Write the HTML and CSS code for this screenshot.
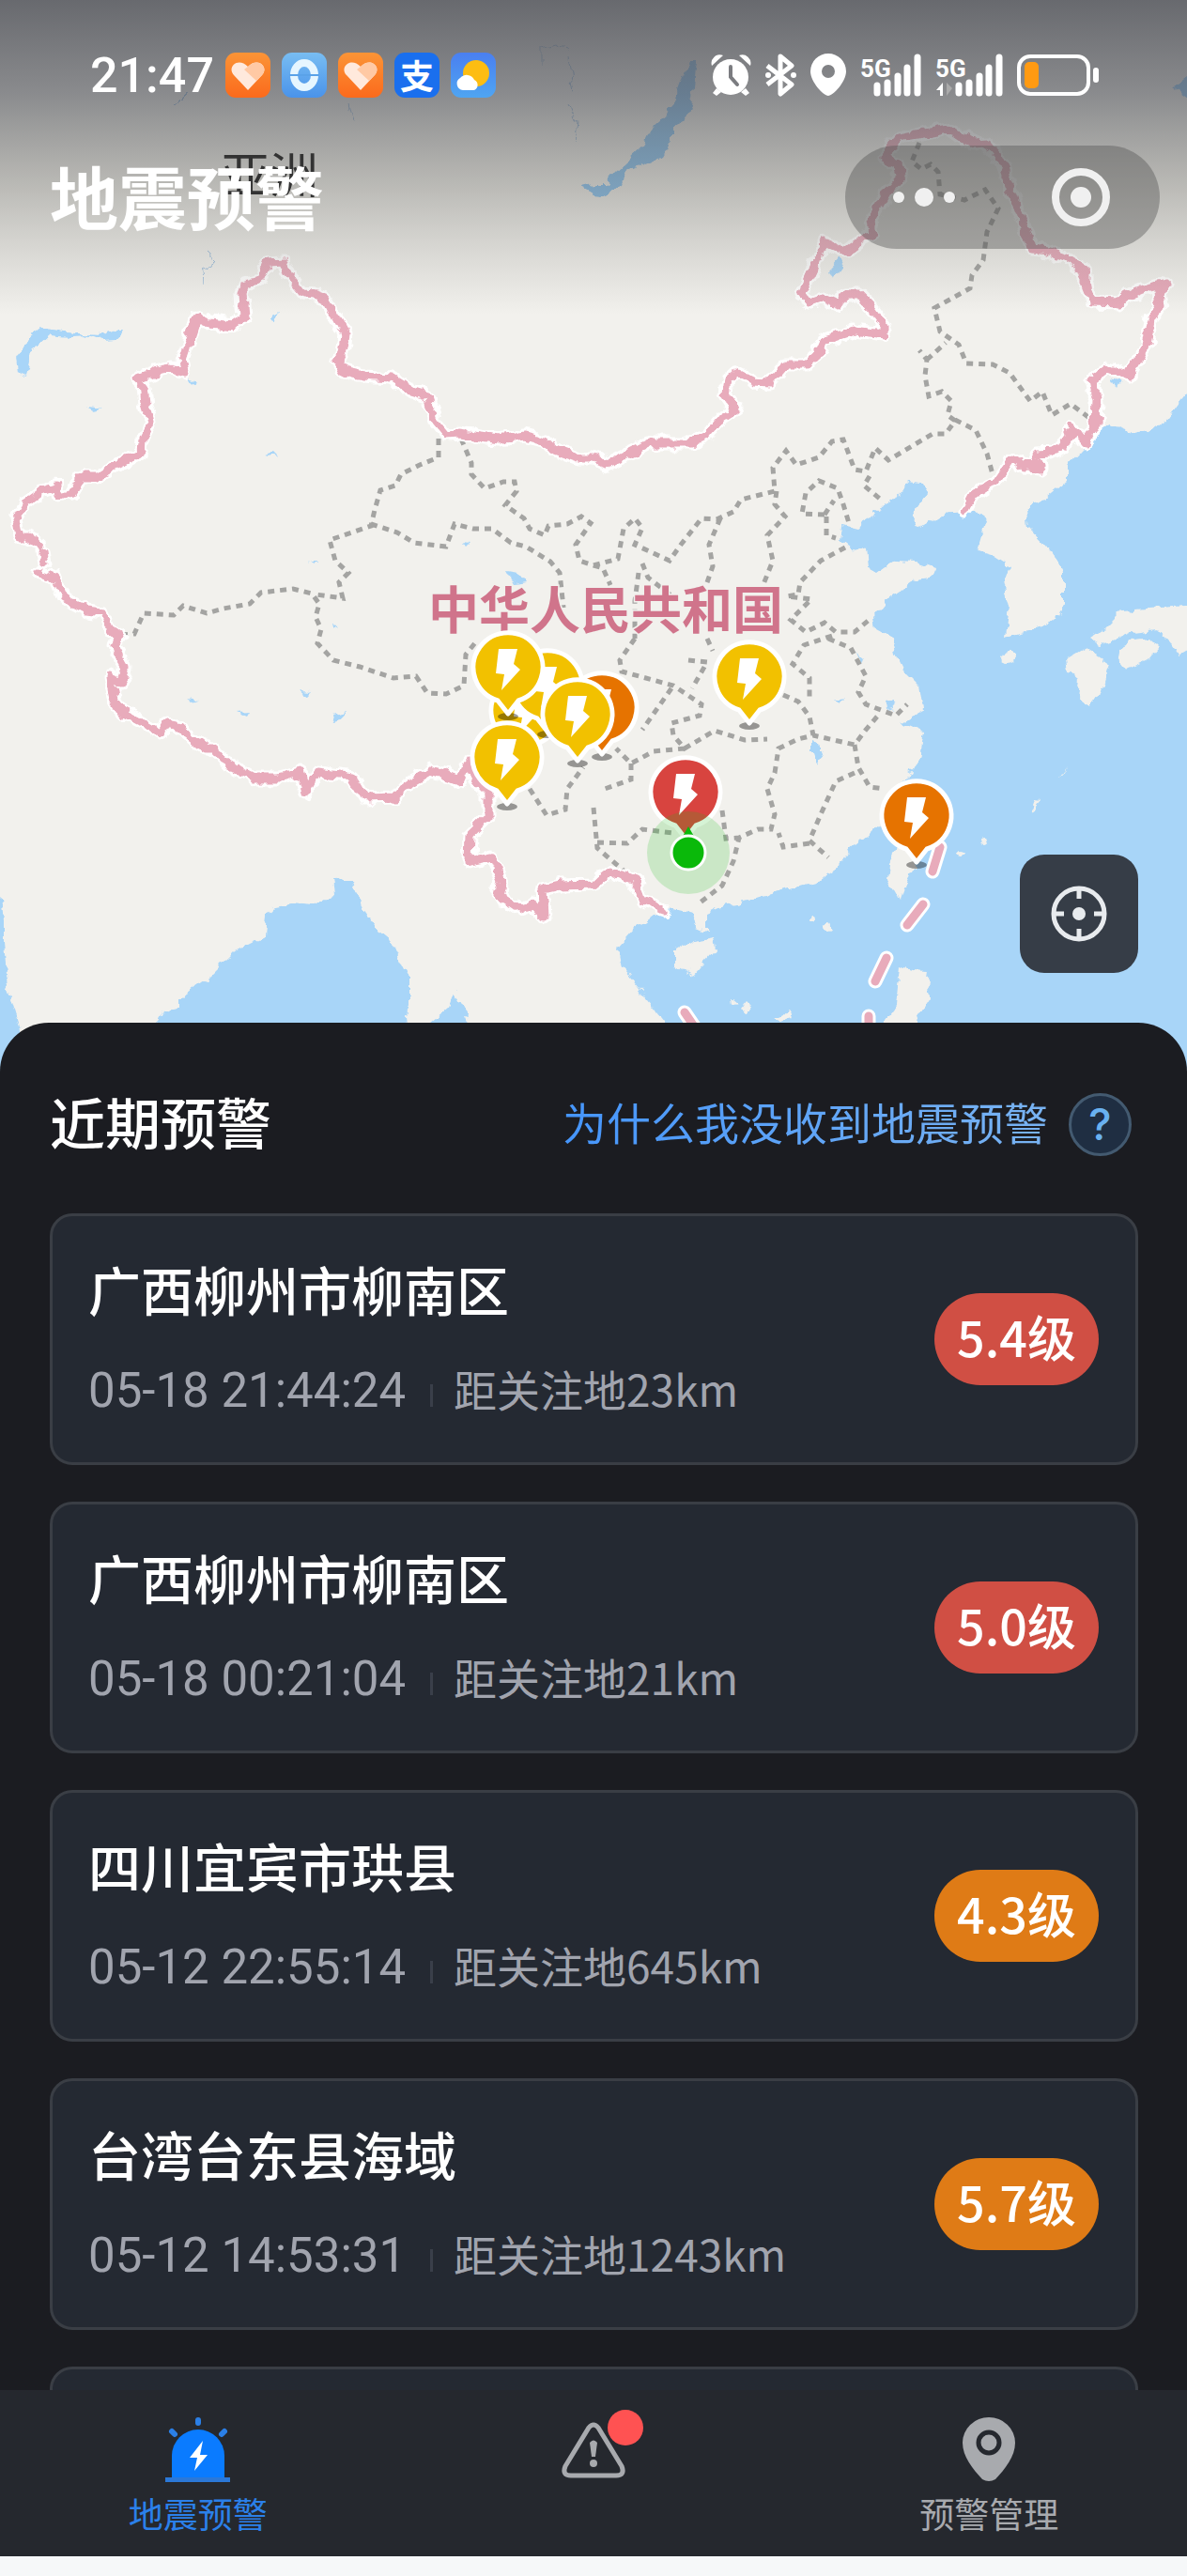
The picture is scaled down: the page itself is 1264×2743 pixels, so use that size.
FILE: index.html
```html
<!DOCTYPE html>
<html lang="zh-CN">
<head>
    <meta charset="UTF-8">
    <meta name="viewport" content="width=device-width, initial-scale=1.0">
    <title>地震预警</title>
    <link rel="stylesheet" href="styles.css">
</head>
<body>
    <div class="app">
        <section class="map">
            <svg class="map-canvas" viewBox="0 0 1264 1145" role="img" aria-label="地图">
                <defs>
                    <linearGradient id="top-shade" x1="0" y1="0" x2="0" y2="1">
                        <stop offset="0" stop-color="#55575d" stop-opacity="0.88"/>
                        <stop offset="0.3" stop-color="#55575d" stop-opacity="0.66"/>
                        <stop offset="0.6" stop-color="#63635f" stop-opacity="0.38"/>
                        <stop offset="0.82" stop-color="#6f6f6a" stop-opacity="0.17"/>
                        <stop offset="1" stop-color="#6f6f6a" stop-opacity="0"/>
                    </linearGradient>
                    <!-- breaks up straight segments of coasts and borders -->
                    <filter id="rough" filterUnits="userSpaceOnUse" x="-20" y="-20" width="1304" height="1185">
                        <feTurbulence type="fractalNoise" baseFrequency="0.07" numOctaves="3" seed="4" result="noise"/>
                        <feDisplacementMap in="SourceGraphic" in2="noise" scale="12" xChannelSelector="R" yChannelSelector="G"/>
                    </filter>
                    <g id="pin">
                        <ellipse cx="0" cy="52" rx="11" ry="4" fill="#000" fill-opacity="0.38"/>
                        <path class="pin-body" d="M0 49 L-11 35 A37 37 0 1 1 11 35 Z"/>
                        <path fill="#fff" d="M-10 -20 H10 L6 -4 L13 2 L-7 24 L-4 7 L-13 6 Z"/>
                    </g>
                    <path id="border" d="M22 572 L18 552 28 535 44 523 60 518 62 528 77 525 87 508 103 508 125 495 151 482 152 467 161 450 155 430 153 412 145 404 165 396 183 392 197 396 194 383 209 337 224 344 247 347 260 338 258 312 262 302 278 297 285 280 301 279 308 293 324 313 336 314 347 318 357 337 368 357 365 375 359 385 365 395 387 400 415 402 439 417 455 422 463 447 476 463 490 462 532 468 558 464 580 470 588 478 617 488 632 488 646 495 692 472 733 472 753 462 765 448 784 436 773 420 775 405 784 397 803 407 819 408 837 388 858 388 870 377 876 363 910 352 942 356 942 347 928 327 914 313 900 313 892 325 876 318 862 323 854 312 868 282 878 258 900 268 918 255 930 248 928 235 946 203 959 188 954 173 942 168 948 158 958 147 987 142 1011 137 1035 153 1051 152 1065 170 1071 188 1087 230 1095 250 1099 265 1116 267 1132 273 1156 288 1156 302 1164 322 1192 323 1200 315 1222 306 1244 302 1234 310 1236 325 1226 340 1220 370 1202 400 1180 392 1163 405 1168 427 1167 453 1155 472 1143 457 1132 475 1120 482 1103 483 1109 498 1089 497 1078 488 1063 510 1035 528 1027 543
                        M30 572 L42 580 M45 588 L47 600
                        M40 610 L60 618 68 637 93 650 109 652 115 667 129 677 121 687 122 693 133 712 128 727 117 720 121 743 129 757 150 768 171 780 177 770 187 772 220 797 228 797 238 810 255 820 270 828 298 828 320 823 326 843 338 822 375 827 389 850 421 849 431 837 459 820 490 832 498 813 508 830 520 843 520 870 500 890 499 917 523 912 534 937 530 953 552 968 568 963 580 975 578 947 596 943 632 942 650 927 676 938 684 960 707 968"/>
                    <path id="sea-border" d="M1001 902 L993 928 M983 963 L966 985 M944 1020 L932 1045 M925 1082 V1100 M729 1078 L744 1100"/>
                </defs>

                <rect width="1264" height="1145" fill="#f2f1ed"/>

                <!-- seas -->
                <g fill="#a8d5f8" filter="url(#rough)">
                    <path d="M1290 400 L1264 417 1253 430 1241 447 1225 458 1208 462 1182 452 1168 458 1152 480 1136 497 1136 513 1115 530 1093 543 1095 560 1114 580 1125 595 1132 610 1132 643 1126 660 1100 670 1071 677 1075 647 1069 620 1075 603 1058 592 1041 587 1051 553 1042 546 1027 545 1003 547 979 562 971 550 987 527 981 515 966 513 954 532 932 543 928 553 914 562 898 558 896 575 906 583 922 585 924 603 936 610 954 597 975 598 995 605 991 615 975 617 946 638 930 658 932 670 950 680 954 697 962 713 979 730 983 757 960 770 983 780 979 807 970 825 958 837 946 858 934 880 906 903 892 925 874 937 834 948 801 958 769 965 753 972 753 992 741 987 738 973 713 967 695 976 676 990 658 1010 662 1030 684 1057 709 1089 V1160 H1290 Z"/>
                    <path d="M160 1160 L167 1089 173 1078 193 1073 193 1062 218 1045 233 1030 250 1013 282 997 284 973 290 966 306 963 335 965 357 953 355 933 363 940 377 940 387 970 400 988 415 1000 427 1027 435 1043 435 1067 431 1080 436 1160 Z"/>
                    <path d="M455 1160 L459 1089 478 1073 484 1057 492 1070 500 1089 505 1160 Z"/>
                    <path d="M-20 940 L0 953 4 980 4 1003 8 1050 20 1089 40 1160 H-20 Z"/>
                </g>

                <!-- islands -->
                <g fill="#f2f1ed" filter="url(#rough)">
                    <path d="M761 998 L763 1010 739 1038 719 1027 719 1013 737 1002 Z"/>
                    <path d="M974 903 L972 927 962 946 958 958 946 937 948 917 955 905 Z"/>
                    <path d="M958 1030 L972 1034 989 1035 987 1050 991 1063 974 1090 V1160 H940 L942 1086 954 1070 Z"/>
                    <path d="M1290 645 L1264 645 1196 650 1178 668 1160 680 1172 688 1208 673 1232 670 1244 683 1255 698 1264 693 1290 690 Z"/>
                    <path d="M1192 690 L1208 682 1224 680 1234 690 1224 702 1200 713 1190 700 Z"/>
                    <path d="M1136 702 L1156 690 1182 707 1176 727 1160 753 1148 743 1150 723 1138 713 Z"/>
                    <ellipse cx="1073" cy="701" rx="8" ry="4"/>
                    <ellipse cx="1023" cy="907" rx="6" ry="3"/>
                    <ellipse cx="1049" cy="898" rx="4" ry="3"/>
                    <ellipse cx="864" cy="979" rx="2" ry="3"/>
                    <ellipse cx="881" cy="986" rx="3" ry="3"/>
                    <path d="M1127 828 L1134 817 1130 826 Z M1097 868 L1103 853 1109 854 Z M780 1063 L786 1068 781 1070 Z M788 1076 L796 1066 800 1070 792 1080 Z M822 1086 L838 1078 842 1084 832 1088 Z"/>
                </g>

                <!-- lakes -->
                <g fill="#a8d5f8" filter="url(#rough)">
                    <path fill="#8cc6f4" d="M733 65 H742 L738 100 731 127 715 137 715 150 705 167 680 177 668 182 662 198 640 208 632 207 619 200 632 197 644 197 656 183 668 172 686 155 696 135 711 122 721 97 Z"/>
                    <path fill="#8cc6f4" d="M1264 82 L1249 93 1264 104 Z"/>
                    <path d="M133 350 L127 362 111 363 97 358 75 359 52 357 42 366 34 373 30 393 28 400 20 393 18 380 26 365 44 350 64 352 91 356 107 357 125 350 Z"/>
                    <path d="M896 275 L899 282 888 297 884 288 Z"/>
                    <path d="M1184 404 L1194 407 1190 415 Z"/>
                    <path d="M540 608 L552 610 559 620 548 622 Z"/>
                    <path d="M297 331 L289 334 288 339 293 340 Z M201 402 L209 405 208 408 203 406 Z M281 484 L290 482 295 487 Z M89 432 L110 434 98 437 Z"/>
                    <path d="M352 762 L366 758 362 766 354 768 Z M317 736 L333 737 327 743 Z M252 758 L264 757 261 762 Z M201 743 L213 745 207 747 Z M328 599 L338 599 332 601 Z M494 579 L500 580 497 583 Z M352 665 L360 666 356 669 Z"/>
                    <path d="M943 747 L951 745 952 755 944 757 Z M866 790 L872 793 875 806 870 815 866 803 Z M889 742 L896 744 900 743 895 748 Z M912 695 L920 702 918 708 Z"/>
                    <path class="river" d="M218 266 L231 278 217 286 218 303 M578 68 V50 L592 46 605 52 M604 60 L610 100 M606 112 L614 130 612 150 M200 98 L186 112 M371 112 L376 128"/>
                </g>

                <!-- provinces -->
                <path class="province" d="M129 676 L143 675 153 653 185 655 195 645 220 653 238 648 266 643 278 631 312 627 332 632 340 643 336 657 342 670 338 685 355 703 383 710 419 722 443 720 455 738 475 739 494 730 496 697 508 682
                    M467 467 L467 487 447 495 427 505 421 517 405 522 399 543 395 560 351 575 357 597 371 610 361 620 365 637 336 633
                    M395 558 L423 567 441 578 475 582 484 558 504 563 524 563 544 578 560 582 586 598 596 610 600 647
                    M491 467 L502 493 502 505 516 520 536 513 548 513 550 523 538 538 558 552 564 563 580 570 584 560 604 558 619 550 629 557 613 580 617 597 632 602 642 605 650 623
                    M632 602 L658 595 664 563 676 552 684 562 676 580 713 597 725 580 747 552 763 553 781 545 789 532 825 523 823 498 837 480 848 495 872 487 886 470 898 468 910 500 922 502 932 477 946 490 993 462 1007 462 1017 448 1009 442 1013 427 1003 417 989 422 985 400 987 383 979 373 M987 383 L1007 365
                    M979 152 L971 172 981 180 991 175 999 183 1001 207 1027 213 1049 202 1063 222 1051 247 1047 277 1035 293 1033 307 995 328 1001 353 1021 367 1029 387 1057 388 1075 397 1097 427 1110 417 1120 442 1140 430 1160 445
                    M1017 447 L1039 458 1051 483 1057 505 M926 507 L920 517 938 532
                    M878 548 L854 547 858 525 872 512 892 520 898 537 904 557 M878 548 L888 533 M880 550 V570 L890 573
                    M827 523 L825 537 836 550 817 570 823 597 813 622
                    M767 552 L755 580 759 603 752 623 M753 680 L759 693
                    M684 600 L690 615 716 635 M680 610 L676 640 676 680
                    M900 583 L874 597 852 620 850 633 838 635 864 638 842 660 858 673 878 663 890 673 910 673 928 658
                    M886 677 L856 687 844 707 862 722 862 743 M834 740 L850 747 862 763 866 783 850 787 829 797 825 823 817 840 825 867 821 883 807 883 787 892 781 917 769 943 743 963
                    M882 680 L906 690 922 720 914 737 922 750 954 762 966 750 M934 763 L922 777 910 793 866 783 M910 793 L914 817 926 838 942 840 M910 823 L890 832 874 867 862 895 882 913 M862 898 L834 902 829 887
                    M676 680 L660 703 662 715 717 730 747 750 745 762 715 770 717 783 729 797 761 778 793 788 817 787
                    M733 703 L753 705 737 733 M715 733 L684 777 M729 797 L696 800 672 813 656 797 M672 813 L672 830 644 840 M632 860 L636 903 664 927 M636 897 L668 898 684 883 717 887 M769 863 L773 893 787 892
                    M564 840 L582 868 602 862 604 840 621 817"/>

                <!-- national border -->
                <g filter="url(#rough)">
                    <use class="border-halo" href="#border"/>
                    <use class="border-line" href="#border"/>
                </g>
                <use class="border-halo" href="#sea-border"/>
                <use class="border-line" href="#sea-border"/>

                <rect width="1264" height="335" fill="url(#top-shade)"/>

                <text class="continent" x="235" y="206">亚洲</text>
                <text class="country" x="456" y="670">中华人民共和国</text>

                <!-- epicentres -->
                <use class="orange" href="#pin" x="641" y="754"/>
                <use class="yellow" href="#pin" x="560" y="757"/>
                <use class="yellow" href="#pin" x="583" y="730"/>
                <use class="yellow" href="#pin" x="615" y="761"/>
                <use class="yellow" href="#pin" x="541" y="711"/>
                <use class="yellow" href="#pin" x="540" y="807"/>
                <use class="yellow" href="#pin" x="798" y="721"/>
                <use class="red" href="#pin" x="730" y="844"/>
                <use class="orange" href="#pin" x="976" y="869"/>

                <!-- followed place -->
                <circle cx="733" cy="908" r="44" fill="#14be14" fill-opacity="0.18"/>
                <path d="M733 880 L741 894 H725 Z" fill="#0ab90a"/>
                <circle cx="733" cy="908" r="18" fill="#0ab90a" stroke="#fff" stroke-width="3"/>
            </svg>

            <header class="overlay">
                <div class="status-bar">
                    <span class="clock">21:47</span>
                    <div class="status-apps">
                        <svg class="app-icon heart" viewBox="0 0 48 48"><path fill="#ffe9dc" d="M24 40 L9 24 C1 15 14 4 24 15 C34 4 47 15 39 24 Z"/><path fill="#ffc9a4" d="M24 15 C34 4 47 15 39 24 L33 30 L20 18 Z"/></svg>
                        <svg class="app-icon ring" viewBox="0 0 48 48"><ellipse cx="24" cy="24" rx="11" ry="13" fill="none" stroke="#e6f6ff" stroke-width="8"/><path d="M8 24 H40" stroke="#5aa2e8" stroke-width="2"/></svg>
                        <svg class="app-icon heart" viewBox="0 0 48 48"><path fill="#ffe9dc" d="M24 40 L9 24 C1 15 14 4 24 15 C34 4 47 15 39 24 Z"/><path fill="#ffc9a4" d="M24 15 C34 4 47 15 39 24 L33 30 L20 18 Z"/></svg>
                        <span class="app-icon pay">支</span>
                        <svg class="app-icon weather" viewBox="0 0 48 48"><circle cx="27" cy="22" r="14" fill="#fdbd12"/><path fill="#fff" d="M13 40 A7 7 0 0 1 10 27 A9 9 0 0 1 25 29 A6 6 0 0 1 25 40 Z"/></svg>
                    </div>
                    <div class="status-system">
                        <svg width="43" height="46" viewBox="0 0 43 46"><g fill="#fff"><circle cx="21" cy="25" r="19"/><path d="M1 13 A9 9 0 0 1 13 2 Z M42 13 A9 9 0 0 0 30 2 Z M6 37 L11 41 L6 45 L2 42 Z M37 37 L32 41 L37 45 L41 42 Z"/></g><path d="M21 14 V25 L28 33" fill="none" stroke="#7b7c80" stroke-width="4" stroke-linecap="round"/></svg>
                        <svg width="33" height="46" viewBox="0 0 33 46"><path d="M2 13 L28 33 L16 43 V3 L28 13 L2 33" fill="none" stroke="#fff" stroke-width="5" stroke-linejoin="round"/><circle cx="30" cy="23" r="3" fill="#fff"/><circle cx="3" cy="23" r="3" fill="#fff"/></svg>
                        <svg width="38" height="46" viewBox="0 0 38 46"><path fill="#fff" fill-rule="evenodd" d="M19 45 C14 45 0 30 0 19 A19 19 0 0 1 38 19 C38 30 24 45 19 45 Z M19 12 A7 7 0 1 0 19 26 A7 7 0 1 0 19 12 Z"/></svg>
                        <svg width="65" height="46" viewBox="0 0 65 46"><text class="net" x="0" y="25">5G</text><path d="M18 34 V42 M29 31 V42 M40 24 V42 M50 15 V42 M61 4 V42" stroke="#fff" stroke-width="7" stroke-linecap="round"/></svg>
                        <svg width="72" height="46" viewBox="0 0 72 46"><text class="net" x="0" y="25">5G</text><path d="M25 34 V42 M36 31 V42 M47 24 V42 M57 15 V42 M68 4 V42" stroke="#fff" stroke-width="7" stroke-linecap="round"/><path d="M1 39 L8 31 V45 H5 V39 Z" fill="#fff"/><path d="M12 31 V45 L18 37 Z" fill="#aaa"/></svg>
                        <svg width="88" height="46" viewBox="0 0 88 46"><rect x="2" y="3" width="74" height="40" rx="12" fill="none" stroke="#fff" stroke-width="4"/><rect x="8" y="9" width="15" height="28" rx="5" fill="#ff9a12"/><rect x="81" y="15" width="6" height="16" rx="3" fill="#fff"/></svg>
                    </div>
                </div>
                <div class="title-bar">
                    <h1>地震预警</h1>
                    <div class="capsule">
                        <button type="button" aria-label="更多">
                            <svg width="66" height="22" viewBox="0 0 66 22" fill="#f0f0f0"><circle cx="6" cy="11" r="6"/><circle cx="33" cy="11" r="10"/><circle cx="60" cy="11" r="6"/></svg>
                        </button>
                        <button type="button" aria-label="关闭">
                            <svg width="62" height="62" viewBox="0 0 62 62"><circle cx="31" cy="31" r="27" fill="none" stroke="#f0f0f0" stroke-width="8"/><circle cx="31" cy="31" r="11" fill="#f0f0f0"/></svg>
                        </button>
                    </div>
                </div>
            </header>

            <button class="locate" type="button" aria-label="定位">
                <svg width="60" height="60" viewBox="0 0 60 60" stroke="#e8ebee" stroke-width="5" fill="none"><circle cx="30" cy="30" r="27"/><path d="M30 3 V14 M30 46 V57 M3 30 H14 M46 30 H57"/><circle cx="30" cy="30" r="7" fill="#e8ebee" stroke="none"/></svg>
            </button>
        </section>

        <main class="sheet">
            <div class="sheet-header">
                <h2>近期预警</h2>
                <a class="help" href="#">
                    <span class="help-text">为什么我没收到地震预警</span>
                    <span class="help-mark">?</span>
                </a>
            </div>
            <ul class="quakes">
                <li class="quake">
                    <div class="quake-info">
                        <h3>广西柳州市柳南区</h3>
                        <p><time>05-18 21:44:24</time><span>距关注地23km</span></p>
                    </div>
                    <strong class="level high">5.4级</strong>
                </li>
                <li class="quake">
                    <div class="quake-info">
                        <h3>广西柳州市柳南区</h3>
                        <p><time>05-18 00:21:04</time><span>距关注地21km</span></p>
                    </div>
                    <strong class="level high">5.0级</strong>
                </li>
                <li class="quake">
                    <div class="quake-info">
                        <h3>四川宜宾市珙县</h3>
                        <p><time>05-12 22:55:14</time><span>距关注地645km</span></p>
                    </div>
                    <strong class="level">4.3级</strong>
                </li>
                <li class="quake">
                    <div class="quake-info">
                        <h3>台湾台东县海域</h3>
                        <p><time>05-12 14:53:31</time><span>距关注地1243km</span></p>
                    </div>
                    <strong class="level">5.7级</strong>
                </li>
                <li class="quake"></li>
            </ul>
        </main>

        <nav class="tabs">
            <a class="tab active" href="#">
                <svg width="70" height="70" viewBox="0 0 70 70"><path fill="#0a7bff" d="M7 66 V42 A28 28 0 0 1 63 42 V66 Z"/><path fill="#2b78d8" d="M0 65 H69 V70 H0 Z"/><path d="M35 4 V7 M7 16 L10 19 M63 16 L60 19" stroke="#2b7fe6" stroke-width="6" stroke-linecap="round"/><path fill="#fff" d="M40 26 L26 44 H34 L31 58 L45 41 H37 Z"/></svg>
                <span>地震预警</span>
            </a>
            <a class="tab" href="#" aria-label="预警">
                <span class="tab-icon">
                    <svg width="70" height="70" viewBox="0 0 70 70"><path d="M30 12 Q35 6 40 12 L65 53 Q69 63 59 63 H11 Q1 63 5 53 Z" fill="none" stroke="#a8aaae" stroke-width="5"/><path d="M31 28 Q35 23 39 28 L37 43 H33 Z" fill="#a8aaae"/><circle cx="35" cy="50" r="4" fill="#a8aaae"/></svg>
                    <i class="dot"></i>
                </span>
            </a>
            <a class="tab" href="#">
                <svg width="70" height="70" viewBox="0 0 70 70"><path fill="#a8aaae" d="M28 67 C18 56 7 43 7 28 A28 27 0 0 1 63 28 C63 43 52 56 42 67 Q35 71 28 67 Z"/><circle cx="35" cy="28" r="11" fill="#a8aaae" stroke="#25282e" stroke-width="5"/></svg>
                <span>预警管理</span>
            </a>
        </nav>
    </div>
</body>
</html>
```
FILE: styles.css
```css
:root {
    --page-bg: #f6f8f9;
    --sheet-bg: #1b1c21;
    --card-bg: #242932;
    --card-border: #3a3e45;
    --bar-bg: #25282e;
    --muted: #a1a4ae;
    --red: #d04f44;
    --orange: #df7b16;
    --cjk: "Noto Sans CJK SC", sans-serif;
}

* {
    box-sizing: border-box;
}

body {
    margin: 0;
    background: var(--page-bg);
    font-family: var(--cjk);
    color: #fff;
}

h1, h2, h3, p, ul {
    margin: 0;
    padding: 0;
}

a {
    color: inherit;
    text-decoration: none;
}

button {
    padding: 0;
    border: none;
    background: none;
    cursor: pointer;
}

svg {
    display: block;
    flex: none;
}

.app {
    height: 100vh;
    padding-bottom: 21px;
    display: flex;
    flex-direction: column;
}

/* Map */
.map {
    position: relative;
    flex: none;
}

.map-canvas {
    width: 100%;
    height: auto;
}

.province {
    fill: none;
    stroke: #a4a4a2;
    stroke-width: 5;
    stroke-dasharray: 7 6;
}

.river {
    fill: none;
    stroke: #9fbfdd;
    stroke-width: 1;
}

.border-halo,
.border-line {
    fill: none;
    stroke-linejoin: round;
    stroke-linecap: round;
}

.border-halo {
    stroke: #fff;
    stroke-width: 15;
}

.border-line {
    stroke: #e8abbb;
    stroke-width: 9;
}

.continent {
    font-size: 52px;
    fill: #333;
}

.country {
    font-size: 54px;
    font-weight: 700;
    fill: #d0748b;
    stroke: #f2f1ed;
    stroke-width: 3;
    paint-order: stroke;
}

.pin-body {
    stroke: #fff;
    stroke-width: 5;
    stroke-linejoin: round;
}

.yellow {
    fill: #f2c100;
}

.orange {
    fill: #e67300;
}

.red {
    fill: #d8443f;
}

.overlay {
    position: absolute;
    top: 0;
    left: 0;
    right: 0;
    padding-top: 56px;
}

.status-bar {
    height: 48px;
    padding: 0 93px 0 96px;
    display: flex;
    align-items: center;
    gap: 12px;
}

.clock {
    font-family: Roboto, sans-serif;
    font-size: 52px;
    font-weight: 500;
}

.status-apps {
    display: flex;
    gap: 12px;
}

.app-icon {
    width: 48px;
    height: 48px;
    border-radius: 11px;
}

.heart {
    background: linear-gradient(#fb9436, #fb6a1c);
}

.ring {
    background: linear-gradient(#78bdf2, #4a93ea);
}

.pay {
    background: #1a6fee;
    font-size: 36px;
    font-weight: 700;
    line-height: 46px;
    text-align: center;
}

.weather {
    background: linear-gradient(#4a7ff0, #4fa5f2);
}

.status-system {
    margin-left: auto;
    display: flex;
    gap: 15px;
}

.net {
    font-family: Roboto, sans-serif;
    font-size: 26px;
    font-weight: 700;
    fill: #fff;
}

.title-bar {
    margin-top: 51px;
    padding: 0 29px 0 53px;
    display: flex;
    justify-content: space-between;
    align-items: center;
}

.title-bar h1 {
    padding-bottom: 6px;
    font-size: 73px;
    font-weight: 700;
    line-height: 104px;
}

.capsule {
    width: 335px;
    height: 110px;
    border-radius: 55px;
    background: rgba(80, 80, 80, 0.4);
    display: flex;
}

.capsule button {
    flex: 1;
    display: flex;
    align-items: center;
    justify-content: center;
}

.locate {
    position: absolute;
    right: 52px;
    bottom: 109px;
    width: 126px;
    height: 126px;
    border-radius: 26px;
    background: #363d47;
    display: flex;
    align-items: center;
    justify-content: center;
}

/* Recent warnings */
.sheet {
    position: relative;
    flex: 1;
    min-height: 0;
    margin-top: -56px;
    padding: 66px 52px 0 53px;
    border-radius: 52px 52px 0 0;
    background: var(--sheet-bg);
    overflow: hidden;
}

.sheet-header {
    height: 84px;
    display: flex;
    justify-content: space-between;
    align-items: center;
}

.sheet-header h2 {
    padding-bottom: 6px;
    font-size: 59px;
    font-weight: 500;
    line-height: 78px;
}

.help {
    padding-right: 7px;
    display: flex;
    align-items: center;
    gap: 22px;
}

.help-text {
    padding-bottom: 6px;
    font-size: 47px;
    line-height: 60px;
    background: linear-gradient(90deg, #4595fb, #79b3f2);
    -webkit-background-clip: text;
    background-clip: text;
    color: transparent;
}

.help-mark {
    width: 67px;
    height: 67px;
    border: 3px solid #435a70;
    border-radius: 50%;
    background: #1f2e42;
    color: #69b1f0;
    font-family: Inter, sans-serif;
    font-size: 46px;
    font-weight: 500;
    line-height: 61px;
    text-align: center;
}

.quakes {
    margin-top: 53px;
    list-style: none;
    display: flex;
    flex-direction: column;
    gap: 39px;
}

.quake {
    height: 268px;
    padding: 0 39px 0 38px;
    border: 3px solid var(--card-border);
    border-radius: 24px;
    background: var(--card-bg);
    display: flex;
    flex: none;
    justify-content: space-between;
    align-items: center;
}

.quake-info {
    padding-bottom: 10px;
}

.quake h3 {
    font-size: 56px;
    font-weight: 500;
    line-height: 80px;
}

.quake p {
    margin-top: 36px;
    display: flex;
    align-items: baseline;
    font-size: 46px;
    line-height: 60px;
    color: var(--muted);
}

.quake time {
    font-family: Roboto, sans-serif;
    font-size: 51px;
}

.quake p span::before {
    content: "";
    display: inline-block;
    width: 3px;
    height: 24px;
    margin: 0 22px 0 26px;
    background: #3a3f4a;
}

.level {
    width: 175px;
    padding-bottom: 6px;
    border-radius: 49px;
    background: var(--orange);
    font-size: 52px;
    font-weight: 500;
    line-height: 92px;
    text-align: center;
}

.level.high {
    background: var(--red);
}

/* Bottom tabs */
.tabs {
    position: relative;
    flex: none;
    height: 177px;
    padding-top: 28px;
    background: var(--bar-bg);
    display: flex;
}

.tab {
    flex: 1;
    display: flex;
    flex-direction: column;
    align-items: center;
    gap: 5px;
    font-size: 37px;
    line-height: 56px;
    color: #a8aaae;
}

.tab.active {
    color: #2b80ea;
}

.tab-icon {
    position: relative;
}

.dot {
    position: absolute;
    top: -7px;
    right: -18px;
    width: 38px;
    height: 38px;
    border-radius: 50%;
    background: #ff5252;
}
```
